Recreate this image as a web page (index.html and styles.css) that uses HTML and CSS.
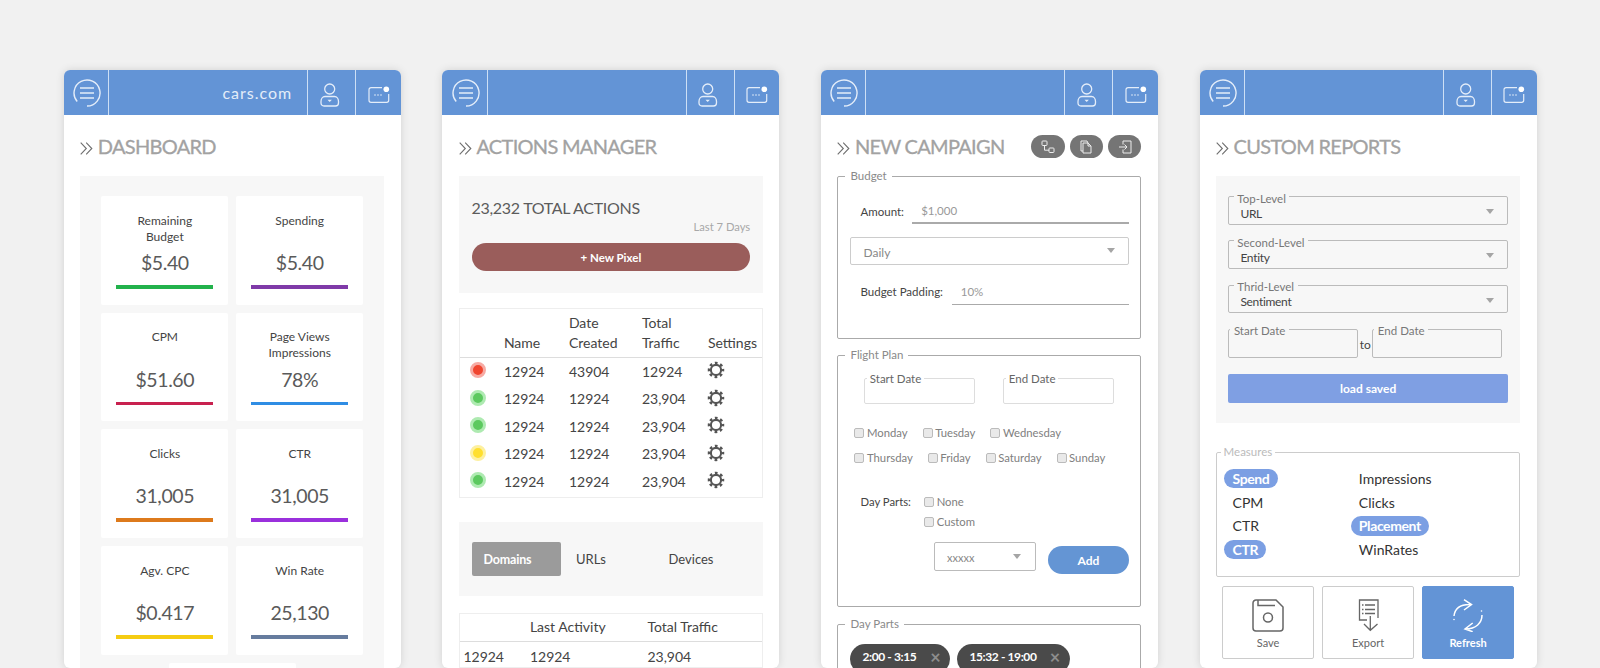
FILE: index.html
```html
<!DOCTYPE html>
<html lang="en">
<head>
  <meta charset="UTF-8" />
  <title>Ad Manager Screens</title>
  <link rel="stylesheet" href="styles.css">
</head>
<body>

  <svg class="defs" xmlns="http://www.w3.org/2000/svg">
    <symbol id="i-menu" viewBox="0 0 28 28">
      <path d="M14 27A13 13 0 1 0 4.2 22.5" fill="none" stroke="currentColor" stroke-width="1.4"/>
      <path d="M7 9h14M7 14h14M7 19h14" stroke="currentColor" stroke-width="1.4"/>
    </symbol>
    <symbol id="i-user" viewBox="0 0 20 26">
      <circle cx="9.7" cy="6" r="5" fill="none" stroke="currentColor" stroke-width="1.3"/>
      <path d="M5 13.5h9.5c2.5 0 4 2.500 4 5V20c0 1.700-1.200 3-3 3H4c-1.800 0-3-1.300-3-3v-1.500c0-2.500 1.500-5 4-5z" fill="none" stroke="currentColor" stroke-width="1.3"/>
      <path d="M7.500 16.800h4.400l-2.200 2.200z" fill="currentColor"/>
    </symbol>
    <symbol id="i-msg" viewBox="0 0 24 20">
      <path d="M15 2.700H4a2 2 0 0 0-2 2v10.600a2 2 0 0 0 2 2h15.700a2 2 0 0 0 2-2V9" fill="none" stroke="currentColor" stroke-width="1.2"/>
      <circle cx="19.300" cy="4.300" r="2.800" fill="#fff"/>
      <circle cx="8" cy="10" r=".8" fill="currentColor"/>
      <circle cx="11" cy="10" r=".8" fill="currentColor"/>
      <circle cx="14" cy="10" r=".8" fill="currentColor"/>
    </symbol>
    <symbol id="i-chev" viewBox="0 0 13 13">
      <path d="M.7.7l5.600 5.800L.7 12.300M6.200.7l5.600 5.800-5.600 5.800" fill="none" stroke="currentColor" stroke-width="1.1"/>
    </symbol>
    <symbol id="i-gear" viewBox="0 0 24 24">
      <circle cx="12" cy="12" r="6.800" fill="none" stroke="currentColor" stroke-width="2.8"/>
      <circle cx="12" cy="12" r="9.300" fill="none" stroke="currentColor" stroke-width="3.4" stroke-dasharray="3.6 3.700" stroke-dashoffset="1.800"/>
    </symbol>
    <symbol id="i-flow" viewBox="0 0 14 14">
      <rect x="1" y="1" width="5" height="4.500" rx=".8" fill="none" stroke="currentColor"/>
      <rect x="8" y="8" width="5" height="4.500" rx=".8" fill="none" stroke="currentColor"/>
      <path d="M3.500 5.500v4.700H8" fill="none" stroke="currentColor"/>
    </symbol>
    <symbol id="i-copy" viewBox="0 0 14 14">
      <path d="M4 3h5l3 3v7H4zM9 3v3h3M4 11H2V1h6l1 2" fill="none" stroke="currentColor"/>
    </symbol>
    <symbol id="i-login" viewBox="0 0 14 14">
      <path d="M5 1h8v12H5V9.500M5 4.500V1M1 7h8M6.500 4.500L9 7l-2.500 2.500" fill="none" stroke="currentColor"/>
    </symbol>
    <symbol id="i-save" viewBox="0 0 32 33">
      <path d="M4 1h20l7 7v21a3 3 0 0 1-3 3H4a3 3 0 0 1-3-3V4a3 3 0 0 1 3-3zM6 1v5.500h17" fill="none" stroke="currentColor" stroke-width="1.5"/>
      <circle cx="16" cy="18.500" r="4.500" fill="none" stroke="currentColor" stroke-width="1.5"/>
    </symbol>
    <symbol id="i-export" viewBox="0 0 22 33">
      <path d="M9 21H1.500V1H20v18M12.300 17v14M6 25l6.300 6.300L19.500 25" fill="none" stroke="currentColor" stroke-width="1.3"/>
      <path d="M4 6h1.500M7 6h10M4 10.500h1.500M7 10.500h10M4 14.500h1.500M7 14.500h10" stroke="currentColor" stroke-width="1.3"/>
    </symbol>
    <symbol id="i-refresh" viewBox="0 0 32 33">
      <path d="M2 17C3 9 9 5 19 5.500M12 .7l7.500 4.800L12 11M30 16c0 8-6 14-16.500 14M20.700 24L13 30l7.700 2.700" fill="none" stroke="currentColor" stroke-width="1.5"/>
      <circle cx="2" cy="20.500" r=".8" fill="currentColor"/>
      <circle cx="29.500" cy="12" r=".8" fill="currentColor"/>
    </symbol>
  </svg>

  <div class="screens">

    <!-- dashboard -->
    <section class="card">
      <header class="topbar">
        <div class="menu-cell"><svg class="ic-menu"><use href="#i-menu"/></svg></div>
        <div class="brand">cars.com</div>
        <div class="user-cell"><svg class="ic-user"><use href="#i-user"/></svg></div>
        <div class="msg-cell"><svg class="ic-msg"><use href="#i-msg"/></svg></div>
      </header>
      <div class="content">
        <div class="title-row">
          <svg class="ic-chev"><use href="#i-chev"/></svg>
          <h2>DASHBOARD</h2>
        </div>
        <div class="panel tiles">
          <div class="tile"><div class="tile-label">Remaining<br>Budget</div><div class="tile-value">$5.40</div><div class="bar bar-green"></div></div>
          <div class="tile"><div class="tile-label">Spending</div><div class="tile-value">$5.40</div><div class="bar bar-purple"></div></div>
          <div class="tile"><div class="tile-label">CPM</div><div class="tile-value">$51.60</div><div class="bar bar-red"></div></div>
          <div class="tile"><div class="tile-label">Page Views<br>Impressions</div><div class="tile-value">78%</div><div class="bar bar-blue"></div></div>
          <div class="tile"><div class="tile-label">Clicks</div><div class="tile-value">31,005</div><div class="bar bar-orange"></div></div>
          <div class="tile"><div class="tile-label">CTR</div><div class="tile-value">31,005</div><div class="bar bar-violet"></div></div>
          <div class="tile"><div class="tile-label">Agv. CPC</div><div class="tile-value">$0.417</div><div class="bar bar-yellow"></div></div>
          <div class="tile"><div class="tile-label">Win Rate</div><div class="tile-value">25,130</div><div class="bar bar-slate"></div></div>
          <div class="tile tile-wide"></div>
        </div>
      </div>
    </section>

    <!-- actions manager -->
    <section class="card">
      <header class="topbar">
        <div class="menu-cell"><svg class="ic-menu"><use href="#i-menu"/></svg></div>
        <div class="brand"></div>
        <div class="user-cell"><svg class="ic-user"><use href="#i-user"/></svg></div>
        <div class="msg-cell"><svg class="ic-msg"><use href="#i-msg"/></svg></div>
      </header>
      <div class="content">
        <div class="title-row">
          <svg class="ic-chev"><use href="#i-chev"/></svg>
          <h2>ACTIONS MANAGER</h2>
        </div>
        <div class="panel totals">
          <div class="totals-num">23,232 TOTAL ACTIONS</div>
          <div class="totals-range">Last 7 Days</div>
          <button class="new-pixel">+ New Pixel</button>
        </div>
        <table class="grid actions-table">
          <colgroup><col class="c-dot"><col class="c-name"><col class="c-date"><col class="c-total"><col></colgroup>
          <thead>
            <tr><th></th><th>Name</th><th>Date<br>Created</th><th>Total<br>Traffic</th><th>Settings</th></tr>
          </thead>
          <tbody>
            <tr><td><span class="dot dot-red"></span></td><td>12924</td><td>43904</td><td>12924</td><td><svg class="ic-gear"><use href="#i-gear"/></svg></td></tr>
            <tr><td><span class="dot dot-green"></span></td><td>12924</td><td>12924</td><td>23,904</td><td><svg class="ic-gear"><use href="#i-gear"/></svg></td></tr>
            <tr><td><span class="dot dot-green"></span></td><td>12924</td><td>12924</td><td>23,904</td><td><svg class="ic-gear"><use href="#i-gear"/></svg></td></tr>
            <tr><td><span class="dot dot-yellow"></span></td><td>12924</td><td>12924</td><td>23,904</td><td><svg class="ic-gear"><use href="#i-gear"/></svg></td></tr>
            <tr class="row-last"><td><span class="dot dot-green"></span></td><td>12924</td><td>12924</td><td>23,904</td><td><svg class="ic-gear"><use href="#i-gear"/></svg></td></tr>
          </tbody>
        </table>
        <div class="panel tabs">
          <div class="tab tab-on">Domains</div>
          <div class="tab tab-urls">URLs</div>
          <div class="tab">Devices</div>
        </div>
        <table class="grid activity-table">
          <colgroup><col class="c-a"><col class="c-b"><col></colgroup>
          <thead>
            <tr><th></th><th>Last Activity</th><th>Total Traffic</th></tr>
          </thead>
          <tbody>
            <tr><td>12924</td><td>12924</td><td>23,904</td></tr>
          </tbody>
        </table>
      </div>
    </section>

    <!-- new campaign -->
    <section class="card">
      <header class="topbar">
        <div class="menu-cell"><svg class="ic-menu"><use href="#i-menu"/></svg></div>
        <div class="brand"></div>
        <div class="user-cell"><svg class="ic-user"><use href="#i-user"/></svg></div>
        <div class="msg-cell"><svg class="ic-msg"><use href="#i-msg"/></svg></div>
      </header>
      <div class="content">
        <div class="title-row">
          <svg class="ic-chev"><use href="#i-chev"/></svg>
          <h2>NEW CAMPAIGN</h2>
          <div class="title-tools">
            <span class="tool"><svg class="ic-tool"><use href="#i-flow"/></svg></span>
            <span class="tool"><svg class="ic-tool"><use href="#i-copy"/></svg></span>
            <span class="tool"><svg class="ic-tool"><use href="#i-login"/></svg></span>
          </div>
        </div>

        <fieldset class="group group-budget">
          <legend>Budget</legend>
          <div class="line-field line-amount">
            <label>Amount:</label>
            <div class="line-input">$1,000</div>
          </div>
          <div class="select select-daily"><span>Daily</span><i class="caret"></i></div>
          <div class="line-field line-padding">
            <label>Budget Padding:</label>
            <div class="line-input line-thin">10%</div>
          </div>
        </fieldset>

        <fieldset class="group group-flight">
          <legend>Flight Plan</legend>
          <div class="date-row">
            <fieldset class="date-box"><legend>Start Date</legend></fieldset>
            <fieldset class="date-box"><legend>End Date</legend></fieldset>
          </div>
          <div class="check-row check-first">
            <span class="check"><i></i>Monday</span>
            <span class="check"><i></i>Tuesday</span>
            <span class="check"><i></i>Wednesday</span>
          </div>
          <div class="check-row">
            <span class="check"><i></i>Thursday</span>
            <span class="check"><i></i>Friday</span>
            <span class="check"><i></i>Saturday</span>
            <span class="check"><i></i>Sunday</span>
          </div>
          <div class="day-parts">
            <label>Day Parts:</label>
            <div class="day-checks">
              <span class="check"><i></i>None</span>
              <span class="check"><i></i>Custom</span>
            </div>
          </div>
          <div class="add-row">
            <div class="select select-small"><span>xxxxx</span><i class="caret"></i></div>
            <button class="add-btn">Add</button>
          </div>
        </fieldset>

        <fieldset class="group group-parts">
          <legend>Day Parts</legend>
          <div class="chips">
            <span class="chip chip-a">2:00 - 3:15<b>×</b></span>
            <span class="chip chip-b">15:32 - 19:00<b>×</b></span>
          </div>
        </fieldset>
      </div>
    </section>

    <!-- custom reports -->
    <section class="card">
      <header class="topbar">
        <div class="menu-cell"><svg class="ic-menu"><use href="#i-menu"/></svg></div>
        <div class="brand"></div>
        <div class="user-cell"><svg class="ic-user"><use href="#i-user"/></svg></div>
        <div class="msg-cell"><svg class="ic-msg"><use href="#i-msg"/></svg></div>
      </header>
      <div class="content">
        <div class="title-row">
          <svg class="ic-chev"><use href="#i-chev"/></svg>
          <h2>CUSTOM REPORTS</h2>
        </div>
        <div class="panel report">
          <fieldset class="level"><legend>Top-Level</legend><div class="level-val"><span>URL</span><i class="caret"></i></div></fieldset>
          <fieldset class="level"><legend>Second-Level</legend><div class="level-val"><span>Entity</span><i class="caret"></i></div></fieldset>
          <fieldset class="level"><legend>Thrid-Level</legend><div class="level-val"><span>Sentiment</span><i class="caret"></i></div></fieldset>
          <div class="report-dates">
            <fieldset class="level-date"><legend>Start Date</legend></fieldset>
            <span class="to">to</span>
            <fieldset class="level-date"><legend>End Date</legend></fieldset>
          </div>
          <button class="load-btn">load saved</button>
        </div>
        <fieldset class="measures">
          <legend>Measures</legend>
          <div class="measure-grid">
            <div><span class="pill">Spend</span></div><div><span class="plain">Impressions</span></div>
            <div><span class="plain">CPM</span></div><div><span class="plain">Clicks</span></div>
            <div><span class="plain">CTR</span></div><div><span class="pill">Placement</span></div>
            <div><span class="pill">CTR</span></div><div><span class="plain">WinRates</span></div>
          </div>
        </fieldset>
        <div class="actions">
          <button class="action"><svg class="ic-save"><use href="#i-save"/></svg><span>Save</span></button>
          <button class="action"><svg class="ic-export"><use href="#i-export"/></svg><span>Export</span></button>
          <button class="action action-on"><svg class="ic-refresh"><use href="#i-refresh"/></svg><span>Refresh</span></button>
        </div>
      </div>
    </section>

  </div>
</body>
</html>
```
FILE: styles.css
```css
* { box-sizing: border-box; }
html, body { height: 668px; margin: 0; overflow: hidden; }
body { background: #f1f1f1; font-family: "Lato", "Noto Sans", sans-serif; color: #444; }
.defs { display: none; }

.screens { display: flex; gap: 41.6px; padding: 70px 0 0 63.8px; }
.card {
  width: 337px;
  height: 598px;
  flex: none;
  background: #fff;
  border-radius: 6px;
  box-shadow: 0 0 9px rgba(0, 0, 0, .13);
  overflow: hidden;
}

/* top bar */
.topbar { display: flex; height: 45px; background: #6394d6; color: #e4edf9; }
.topbar > div { display: flex; align-items: center; justify-content: center; }
.menu-cell { width: 45.5px; border-right: 1.5px solid #cddff5; }
.topbar .brand { flex: 1; justify-content: flex-end; padding: 0 15px 1px 0; font-size: 16px; letter-spacing: 1px; }
.user-cell { width: 48px; border-left: 1.5px solid #cddff5; }
.msg-cell { width: 45.5px; border-left: 1.5px solid #cddff5; }
.ic-menu { width: 28px; height: 28px; margin-left: 2px; }
.ic-user { width: 20px; height: 26px; margin: 7px 4px 0 0; }
.ic-msg { width: 24px; height: 20px; margin-top: 5px; }

.content { padding: 0 16.5px; }
.title-row { display: flex; align-items: center; height: 61px; padding-top: 1px; }
.title-row h2 { margin: 0 0 0 4.5px; font-size: 20px; font-weight: 400; letter-spacing: -.7px; color: #a2a2a2; line-height: 26px; -webkit-text-stroke: .3px #a2a2a2; }
.ic-chev { width: 13px; height: 13px; margin-top: 5px; color: #6f6f6f; flex: none; }
.title-tools { display: flex; gap: 5.2px; margin-left: auto; margin-top: 1px; }
.tool { display: flex; align-items: center; justify-content: center; width: 33.3px; height: 23.7px; border-radius: 12px; background: #757575; color: #eee; }
.ic-tool { width: 14px; height: 14px; }

.panel { background: #f7f7f7; }

/* dashboard */
.tiles { display: grid; grid-template-columns: 126.7px 126.7px; gap: 8.2px; padding: 20px 21.2px 0; height: 500px; align-content: start; }
.tile { height: 108.5px; padding: 16.5px 15px 16px; background: #fff; border-radius: 2px; text-align: center; }
.tile-wide { grid-column: 1 / -1; justify-self: center; width: 126.7px; }
.tile-label { height: 32px; font-size: 12px; line-height: 16px; color: #444; }
.tile-value { height: 24px; margin-top: 6.5px; font-size: 19.5px; letter-spacing: -.4px; line-height: 24px; color: #5a5a5a; }
.bar { height: 3.5px; margin-top: 10px; }
.bar-green { background: #22b24c; }
.bar-purple { background: #7f3aa8; }
.bar-red { background: #c8214f; }
.bar-blue { background: #2f8de4; }
.bar-orange { background: #dd7a1c; }
.bar-violet { background: #9a30dc; }
.bar-yellow { background: #f5cc12; }
.bar-slate { background: #667c9e; }

/* actions manager */
.totals { height: 117px; padding: 21px 12.7px 0; }
.totals-num { font-size: 16px; letter-spacing: -.3px; line-height: 22px; color: #5c5c5c; }
.totals-range { font-size: 11.2px; line-height: 16px; color: #a8a8a8; text-align: right; }
.new-pixel {
  display: block;
  width: 100%;
  height: 28px;
  margin-top: 8.3px;
  border: 0;
  border-radius: 14px;
  background: #9a5d5b;
  color: #fff;
  font: 700 11.5px "Lato", sans-serif;
}

.grid { width: 100%; table-layout: fixed; border-collapse: separate; border-spacing: 0; border: 1.5px solid #eee; font-size: 14px; color: #444; }
.grid th { padding: 0; font-weight: 400; text-align: left; vertical-align: bottom; line-height: 20px; border-bottom: 1.5px solid #ddd; }
.grid td { padding: 0; }

.actions-table { margin-top: 15px; }
.actions-table thead tr { height: 48.5px; }
.actions-table th { padding-bottom: 4px; }
.actions-table tbody tr { height: 27.5px; }
.actions-table tbody .row-last { height: 29px; }
.row-last td { padding-bottom: 1.5px; }
.c-dot { width: 44px; }
.c-name { width: 65px; }
.c-date { width: 73px; }
.c-total { width: 66px; }
.dot { display: block; width: 16px; height: 16px; margin: 0 0 2px 10px; border-radius: 50%; border: 3px solid; }
.dot-red { background: #f0452f; border-color: #f7aaa3; }
.dot-green { background: #5cc95f; border-color: #aeeab1; }
.dot-yellow { background: #ffdf2e; border-color: #fdf0a0; }
.ic-gear { display: block; width: 18px; height: 18px; margin: 0 0 2px -.5px; color: #555; }

.tabs { display: flex; align-items: center; height: 74px; margin-top: 24.7px; padding: 0 12.7px; font-size: 13px; color: #444; }
.tab { line-height: 35px; height: 33.7px; }
.tab-on { width: 89.3px; margin-right: 15.2px; padding-left: 12px; border-radius: 2px; background: #9b9b9b; color: #fff; font-size: 12.5px; font-weight: 700; letter-spacing: -.2px; }
.tab-urls { width: 92.5px; }

.activity-table { margin-top: 17px; }
.activity-table thead tr { height: 28px; }
.activity-table th { padding-bottom: 4px; }
.activity-table td { padding-top: 5px; line-height: 20px; }
.activity-table td:first-child { padding-left: 3.5px; }
.c-a { width: 70px; }
.c-b { width: 117.5px; }

/* new campaign */
legend { padding: 0 5px; font-size: 11.5px; line-height: 14px; color: #8a8a8a; }
.group { margin: 0; min-width: 0; border: 1.5px solid #aaa; border-radius: 2px; padding: 0 11.5px 0 12px; }
.group legend { margin-left: -5px; }
.group-budget { margin-top: -7px; padding-bottom: 33.8px; }
.group-flight { margin-top: 8.7px; padding-bottom: 32.5px; }
.group-parts { margin-top: 10px; height: 100px; }

.line-field { display: flex; align-items: center; height: 26px; padding-left: 10px; font-size: 11.5px; color: #444; }
.line-field label { flex: none; }
.line-amount { margin-top: 15.4px; }
.line-amount label { width: 51.7px; }
.line-padding { margin-top: 13.7px; }
.line-padding label { width: 91.3px; }
.line-input { flex: 1; height: 26px; padding-left: 9px; border-bottom: 2px solid #aaa; line-height: 26px; color: #999; }
.line-thin { border-bottom-width: 1.5px; }

.select { display: flex; align-items: center; justify-content: space-between; border: 1.5px solid #ccc; border-radius: 2px; font-size: 12px; color: #888; }
.select span { padding-top: 3px; }
.select-daily { height: 28px; margin-top: 12.6px; padding: 0 13px 0 12px; }
.select-small { width: 101.7px; height: 28.4px; padding: 0 14px 0 12px; border-color: #bbb; font-size: 11px; }
.caret { display: block; width: 0; height: 0; border: 4.5px solid transparent; border-top: 5px solid #a5a5a5; border-bottom: 0; }

.date-row { display: flex; gap: 27.6px; margin: 9.5px 0 0 13.3px; }
.date-box { width: 111.4px; height: 32.3px; margin: 0; padding: 0; min-width: 0; border: 1.5px solid #ddd; border-radius: 2px; }
.date-box legend { margin-left: 2px; padding: 0 3px; color: #666; }

.check-row { display: flex; gap: 15px; margin: 8.3px 0 0 4px; }
.check-first { margin-top: 21.5px; }
.check { display: flex; align-items: center; font-size: 11.3px; line-height: 16px; color: #808080; }
.check i { width: 10px; height: 10px; margin-right: 2.5px; border: 1px solid #bbb; border-radius: 2px; background: #e9e9e9; }

.day-parts { display: flex; margin: 28px 0 0 10px; font-size: 11.3px; line-height: 16px; color: #444; }
.day-parts label { width: 63.7px; flex: none; }
.day-checks { display: flex; flex-direction: column; gap: 4.5px; }

.add-row { display: flex; justify-content: flex-end; gap: 12.3px; margin-top: 12px; }
.add-btn { width: 81px; height: 27.7px; margin-top: 4px; border: 0; border-radius: 14px; background: #6495d4; color: #fff; font: 700 12px "Lato", sans-serif; }

.chips { display: flex; gap: 7.3px; margin-top: 13px; }
.chip { display: flex; align-items: center; justify-content: space-between; height: 30px; padding: 0 10px 4px 12px; border-radius: 15px; background: #4a4a4a; color: #fff; font-size: 12px; line-height: 16px; font-weight: 700; letter-spacing: -.4px; }
.chip b { font-size: 18px; line-height: 16px; font-weight: 700; color: #8d8d8d; }
.chip-a { width: 99.7px; }
.chip-b { width: 112.3px; }

/* custom reports */
.report { height: 247px; padding: 12.7px 12.3px 0; }
.level { margin: 8.3px 0 0; padding: 0 13px 0 11px; min-width: 0; height: 36px; border: 1.5px solid #bbb; border-radius: 2px; }
.level:first-child { margin-top: 0; }
.level legend, .level-date legend { padding: 4px 3.5px 0; line-height: 12px; color: #777; }
.level legend { margin-left: -6.6px; }
.level-val { display: flex; align-items: center; justify-content: space-between; height: 17px; font-size: 12px; letter-spacing: -.3px; line-height: 17px; color: #444; }
.level-val .caret { margin-top: -3px; }
.report-dates { display: flex; margin-top: 8px; }
.level-date { width: 129.7px; height: 36.7px; margin: 0; padding: 0; min-width: 0; border: 1.5px solid #bbb; border-radius: 2px; }
.level-date legend { margin-left: 1px; }
.to { width: 14.3px; padding-top: 16px; font-size: 12px; line-height: 16px; text-align: center; }
.load-btn { display: block; width: 100%; height: 28.7px; margin-top: 16.3px; border: 0; border-radius: 2px; background: #7f9fe3; color: #fff; font: 700 12px "Lato", sans-serif; }

.measures { margin: 22.3px 0 0; padding: 7.5px 0 15.2px 7.2px; min-width: 0; border: 1.5px solid #ccc; border-radius: 2px; }
.measures legend { margin-left: -3.7px; padding: 0 3px; color: #bbb; }
.measure-grid { display: grid; grid-template-columns: 126.3px 1fr; grid-auto-rows: 23.6px; align-items: center; font-size: 14px; color: #333; }
.plain { padding-left: 8.3px; }
.pill { display: inline-block; padding: 0 8.3px; height: 19.5px; line-height: 19.5px; border-radius: 10px; background: #7b9fe3; color: #fff; font-weight: 700; letter-spacing: -.4px; }

.actions { display: flex; gap: 8.6px; margin: 8.6px 6.3px 0; }
.action { display: flex; flex-direction: column; align-items: center; width: 91.4px; height: 73px; padding: 12.5px 0 0; border: 1.5px solid #ccc; border-radius: 2px; background: #fff; color: #666; font: 400 11px "Lato", sans-serif; }
.action span { margin-top: 4px; line-height: 14px; }
.action svg { height: 33px; flex: none; }
.ic-save { width: 32px; }
.ic-export { width: 22px; margin-left: 1px; }
.ic-refresh { width: 32px; }
.action-on { border-color: #6394d6; background: #6394d6; color: #fff; font-weight: 700; }
```
